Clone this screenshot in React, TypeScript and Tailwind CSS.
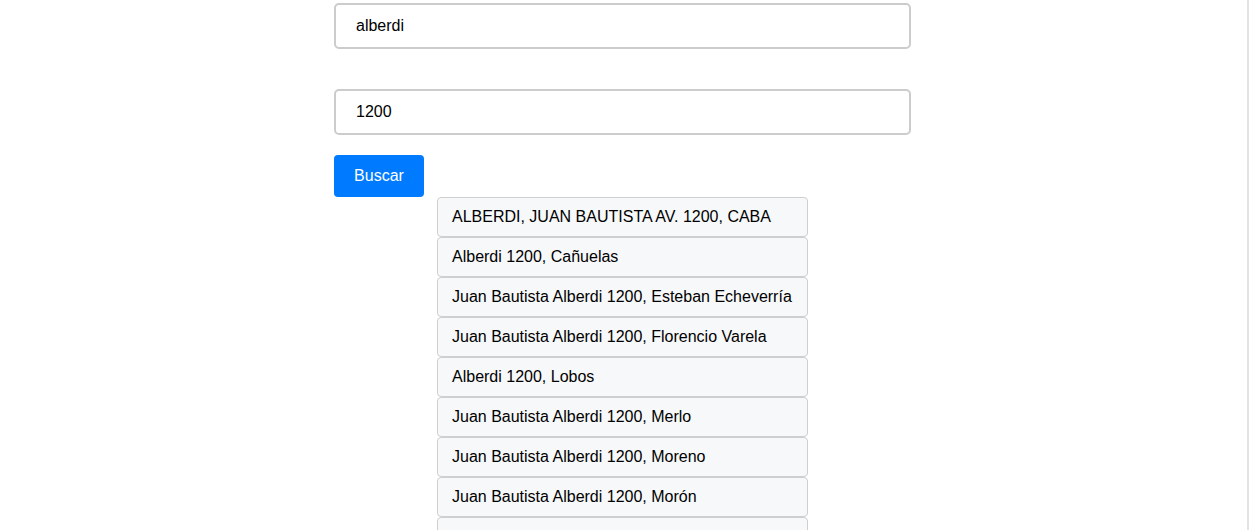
import React from "react";

const results = [
  "ALBERDI, JUAN BAUTISTA AV. 1200, CABA",
  "Alberdi 1200, Cañuelas",
  "Juan Bautista Alberdi 1200, Esteban Echeverría",
  "Juan Bautista Alberdi 1200, Florencio Varela",
  "Alberdi 1200, Lobos",
  "Juan Bautista Alberdi 1200, Merlo",
  "Juan Bautista Alberdi 1200, Moreno",
  "Juan Bautista Alberdi 1200, Morón",
  "Juan Bautista Alberdi 1200, Pilar",
];

export default function App() {
  return (
    <div className="flex h-[530px] overflow-hidden bg-white font-['Liberation_Sans',Arial,sans-serif] text-base text-black">
      <main className="flex-1 pl-[334px] pt-[3px]">
        <div className="flex w-[577px] flex-col">
          <input
            defaultValue="alberdi"
            className="h-[46px] rounded-[5px] border-2 border-[#cccccc] px-[20px] text-base outline-none"
          />
          <input
            defaultValue="1200"
            className="mt-[40px] h-[46px] rounded-[5px] border-2 border-[#cccccc] px-[20px] text-base outline-none"
          />
        </div>
        <button className="mt-[20px] h-[42px] w-[90px] rounded-[4px] bg-[#007bff] text-base text-white">
          Buscar
        </button>
        <ul className="ml-[103px] flex w-[371px] flex-col">
          {results.map((r) => (
            <li
              key={r}
              className="flex h-[40px] items-center rounded-[4px] border border-[#cfcfcf] bg-[#f7f8fa] px-[14px] whitespace-nowrap"
            >
              {r}
            </li>
          ))}
        </ul>
      </main>
      <div className="mr-px w-[2px] bg-[#e3e3e3]" />
    </div>
  );
}
